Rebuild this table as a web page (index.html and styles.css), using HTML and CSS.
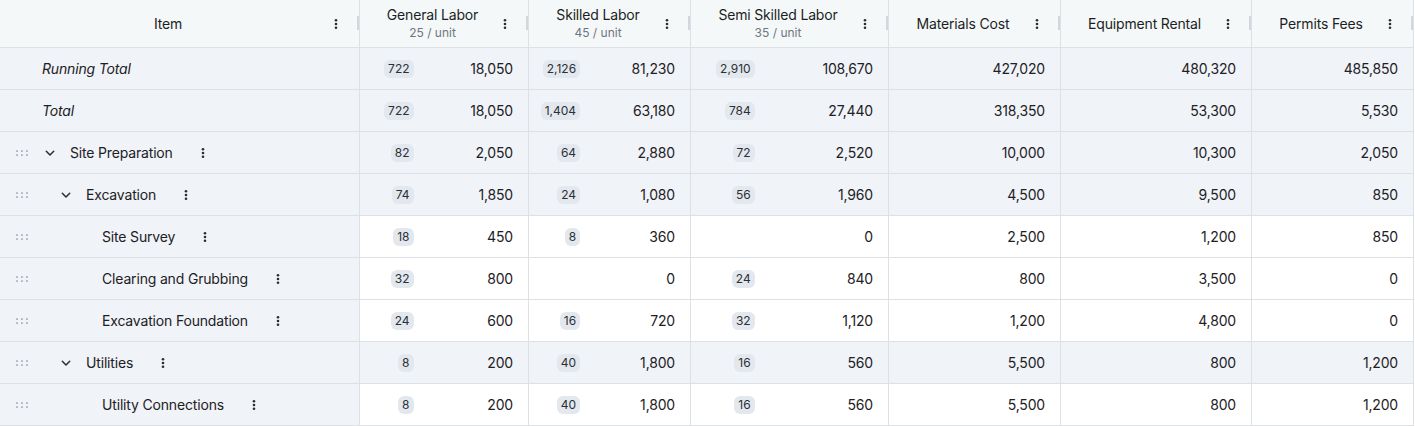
FILE: index.html
```html
<!DOCTYPE html>
<html lang="en">
<head>
<meta charset="utf-8">
<title>Cost Table</title>
<link rel="stylesheet" href="styles.css">
</head>
<body>
<svg class="defs" width="0" height="0" aria-hidden="true">
  <defs>
    <symbol id="kebab" viewBox="0 0 16 16">
      <circle cx="8" cy="4.2" r="1.3"/>
      <circle cx="8" cy="8" r="1.3"/>
      <circle cx="8" cy="11.8" r="1.3"/>
    </symbol>
    <symbol id="grip" viewBox="0 0 20 10">
      <circle cx="5" cy="3" r="0.85"/>
      <circle cx="10" cy="3" r="0.85"/>
      <circle cx="15" cy="3" r="0.85"/>
      <circle cx="5" cy="7" r="0.85"/>
      <circle cx="10" cy="7" r="0.85"/>
      <circle cx="15" cy="7" r="0.85"/>
    </symbol>
    <symbol id="chev" viewBox="0 0 16 16">
      <polyline points="4.3,6.3 8,10 11.7,6.3" fill="none" stroke="currentColor" stroke-width="1.5" stroke-linecap="round" stroke-linejoin="round"/>
    </symbol>
  </defs>
</svg>

<div class="grid">
  <div class="row head">
    <div class="hcell"><div class="hlabel"><span class="ht">Item</span></div><svg class="kb"><use href="#kebab"/></svg><span class="rz"></span></div>
    <div class="hcell"><div class="hlabel"><span class="ht">General Labor</span><span class="hs">25 / unit</span></div><svg class="kb"><use href="#kebab"/></svg><span class="rz"></span></div>
    <div class="hcell"><div class="hlabel"><span class="ht">Skilled Labor</span><span class="hs">45 / unit</span></div><svg class="kb"><use href="#kebab"/></svg><span class="rz"></span></div>
    <div class="hcell"><div class="hlabel"><span class="ht">Semi Skilled Labor</span><span class="hs">35 / unit</span></div><svg class="kb"><use href="#kebab"/></svg><span class="rz"></span></div>
    <div class="hcell"><div class="hlabel"><span class="ht">Materials Cost</span></div><svg class="kb"><use href="#kebab"/></svg><span class="rz"></span></div>
    <div class="hcell"><div class="hlabel"><span class="ht">Equipment Rental</span></div><svg class="kb"><use href="#kebab"/></svg><span class="rz"></span></div>
    <div class="hcell"><div class="hlabel"><span class="ht">Permits Fees</span></div><svg class="kb"><use href="#kebab"/></svg><span class="rz"></span></div>
  </div>

  <div class="row shaded">
    <div class="icell total"><span class="name">Running Total</span></div>
    <div class="lcell"><span class="slot"><span class="badge">722</span></span><span class="val">18,050</span></div>
    <div class="lcell"><span class="slot"><span class="badge">2,126</span></span><span class="val">81,230</span></div>
    <div class="lcell"><span class="slot"><span class="badge">2,910</span></span><span class="val">108,670</span></div>
    <div class="ncell">427,020</div>
    <div class="ncell">480,320</div>
    <div class="ncell">485,850</div>
  </div>

  <div class="row shaded">
    <div class="icell total"><span class="name">Total</span></div>
    <div class="lcell"><span class="slot"><span class="badge">722</span></span><span class="val">18,050</span></div>
    <div class="lcell"><span class="slot"><span class="badge">1,404</span></span><span class="val">63,180</span></div>
    <div class="lcell"><span class="slot"><span class="badge">784</span></span><span class="val">27,440</span></div>
    <div class="ncell">318,350</div>
    <div class="ncell">53,300</div>
    <div class="ncell">5,530</div>
  </div>

  <div class="row shaded">
    <div class="icell"><svg class="grip"><use href="#grip"/></svg><span class="indent l0"></span><svg class="chev"><use href="#chev"/></svg><span class="name">Site Preparation</span><svg class="kb"><use href="#kebab"/></svg></div>
    <div class="lcell"><span class="slot"><span class="badge">82</span></span><span class="val">2,050</span></div>
    <div class="lcell"><span class="slot"><span class="badge">64</span></span><span class="val">2,880</span></div>
    <div class="lcell"><span class="slot"><span class="badge">72</span></span><span class="val">2,520</span></div>
    <div class="ncell">10,000</div>
    <div class="ncell">10,300</div>
    <div class="ncell">2,050</div>
  </div>

  <div class="row shaded">
    <div class="icell"><svg class="grip"><use href="#grip"/></svg><span class="indent l1"></span><svg class="chev"><use href="#chev"/></svg><span class="name">Excavation</span><svg class="kb"><use href="#kebab"/></svg></div>
    <div class="lcell"><span class="slot"><span class="badge">74</span></span><span class="val">1,850</span></div>
    <div class="lcell"><span class="slot"><span class="badge">24</span></span><span class="val">1,080</span></div>
    <div class="lcell"><span class="slot"><span class="badge">56</span></span><span class="val">1,960</span></div>
    <div class="ncell">4,500</div>
    <div class="ncell">9,500</div>
    <div class="ncell">850</div>
  </div>

  <div class="row">
    <div class="icell"><svg class="grip"><use href="#grip"/></svg><span class="indent l2"></span><span class="chev-sp"></span><span class="name">Site Survey</span><svg class="kb"><use href="#kebab"/></svg></div>
    <div class="lcell"><span class="slot"><span class="badge">18</span></span><span class="val">450</span></div>
    <div class="lcell"><span class="slot"><span class="badge">8</span></span><span class="val">360</span></div>
    <div class="lcell"><span class="slot"></span><span class="val">0</span></div>
    <div class="ncell">2,500</div>
    <div class="ncell">1,200</div>
    <div class="ncell">850</div>
  </div>

  <div class="row">
    <div class="icell"><svg class="grip"><use href="#grip"/></svg><span class="indent l2"></span><span class="chev-sp"></span><span class="name">Clearing and Grubbing</span><svg class="kb"><use href="#kebab"/></svg></div>
    <div class="lcell"><span class="slot"><span class="badge">32</span></span><span class="val">800</span></div>
    <div class="lcell"><span class="slot"></span><span class="val">0</span></div>
    <div class="lcell"><span class="slot"><span class="badge">24</span></span><span class="val">840</span></div>
    <div class="ncell">800</div>
    <div class="ncell">3,500</div>
    <div class="ncell">0</div>
  </div>

  <div class="row">
    <div class="icell"><svg class="grip"><use href="#grip"/></svg><span class="indent l2"></span><span class="chev-sp"></span><span class="name">Excavation Foundation</span><svg class="kb"><use href="#kebab"/></svg></div>
    <div class="lcell"><span class="slot"><span class="badge">24</span></span><span class="val">600</span></div>
    <div class="lcell"><span class="slot"><span class="badge">16</span></span><span class="val">720</span></div>
    <div class="lcell"><span class="slot"><span class="badge">32</span></span><span class="val">1,120</span></div>
    <div class="ncell">1,200</div>
    <div class="ncell">4,800</div>
    <div class="ncell">0</div>
  </div>

  <div class="row shaded">
    <div class="icell"><svg class="grip"><use href="#grip"/></svg><span class="indent l1"></span><svg class="chev"><use href="#chev"/></svg><span class="name">Utilities</span><svg class="kb"><use href="#kebab"/></svg></div>
    <div class="lcell"><span class="slot"><span class="badge">8</span></span><span class="val">200</span></div>
    <div class="lcell"><span class="slot"><span class="badge">40</span></span><span class="val">1,800</span></div>
    <div class="lcell"><span class="slot"><span class="badge">16</span></span><span class="val">560</span></div>
    <div class="ncell">5,500</div>
    <div class="ncell">800</div>
    <div class="ncell">1,200</div>
  </div>

  <div class="row">
    <div class="icell"><svg class="grip"><use href="#grip"/></svg><span class="indent l2"></span><span class="chev-sp"></span><span class="name">Utility Connections</span><svg class="kb"><use href="#kebab"/></svg></div>
    <div class="lcell"><span class="slot"><span class="badge">8</span></span><span class="val">200</span></div>
    <div class="lcell"><span class="slot"><span class="badge">40</span></span><span class="val">1,800</span></div>
    <div class="lcell"><span class="slot"><span class="badge">16</span></span><span class="val">560</span></div>
    <div class="ncell">5,500</div>
    <div class="ncell">800</div>
    <div class="ncell">1,200</div>
  </div>
</div>
</body>
</html>
```

FILE: styles.css
```css
* { box-sizing: border-box; }

html, body {
  margin: 0;
  padding: 0;
  background: #ffffff;
}

body {
  font-family: Inter, "Liberation Sans", Arial, sans-serif;
  font-size: 14px;
  letter-spacing: -0.17px;
  color: #1d2125;
}

.defs { position: absolute; width: 0; height: 0; overflow: hidden; }

.grid {
  width: 1414px;
  display: flex;
  flex-direction: column;
}

.row {
  display: grid;
  grid-template-columns: 360px 169px 162px 198px 172px 191px 162px;
  height: 42px;
}

.row > div {
  border-right: 1px solid #dde1e5;
  border-bottom: 1px solid #dde1e5;
  min-width: 0;
}

.row.head { height: 48px; }

.hcell {
  position: relative;
  background: #f5f8f9;
  display: flex;
  align-items: center;
  padding: 0 15px;
}

.hlabel {
  flex: 1;
  display: flex;
  flex-direction: column;
  align-items: center;
  text-align: center;
}

.ht {
  font-size: 14px;
  line-height: 17px;
  color: #1b1f23;
}

.hs {
  font-size: 12px;
  line-height: 16px;
  margin-top: 2px;
  letter-spacing: 0;
  color: #6f767e;
}

.kb {
  width: 16px;
  height: 16px;
  flex: none;
  fill: #2a2e33;
}

.hcell .kb { margin-left: 7px; }

.rz {
  position: absolute;
  right: 0;
  top: 16px;
  width: 2px;
  height: 14px;
  background: #d3d7db;
}

.row.shaded > div { background: #f0f3f7; }
.row > .icell { background: #f0f3f7; }

.icell {
  display: flex;
  align-items: center;
  padding-left: 12px;
}

.icell.total { padding-left: 42px; }
.icell.total .name { font-style: italic; }

.grip {
  width: 20px;
  height: 10px;
  flex: none;
  fill: #868c92;
  margin-right: 10px;
}

.indent { flex: none; }
.indent.l0 { width: 0; }
.indent.l1 { width: 16px; }
.indent.l2 { width: 32px; }

.chev {
  width: 16px;
  height: 16px;
  flex: none;
  color: #2a2e33;
  margin-right: 12px;
}

.chev-sp {
  width: 16px;
  flex: none;
  margin-right: 12px;
}

.name {
  white-space: nowrap;
  color: #1d2125;
}

.icell .kb { margin-left: 22px; }

.lcell {
  display: grid;
  grid-template-columns: 35% 1fr;
  align-items: center;
  padding-right: 15px;
}

.slot {
  display: flex;
  justify-content: flex-end;
}

.badge {
  display: inline-block;
  height: 18px;
  line-height: 18px;
  padding: 0 4px;
  border-radius: 6px;
  background: #e3e8ef;
  font-size: 12px;
  letter-spacing: 0;
  color: #2b3036;
}

.val {
  text-align: right;
}

.ncell {
  display: flex;
  align-items: center;
  justify-content: flex-end;
  padding-right: 15px;
}
```
